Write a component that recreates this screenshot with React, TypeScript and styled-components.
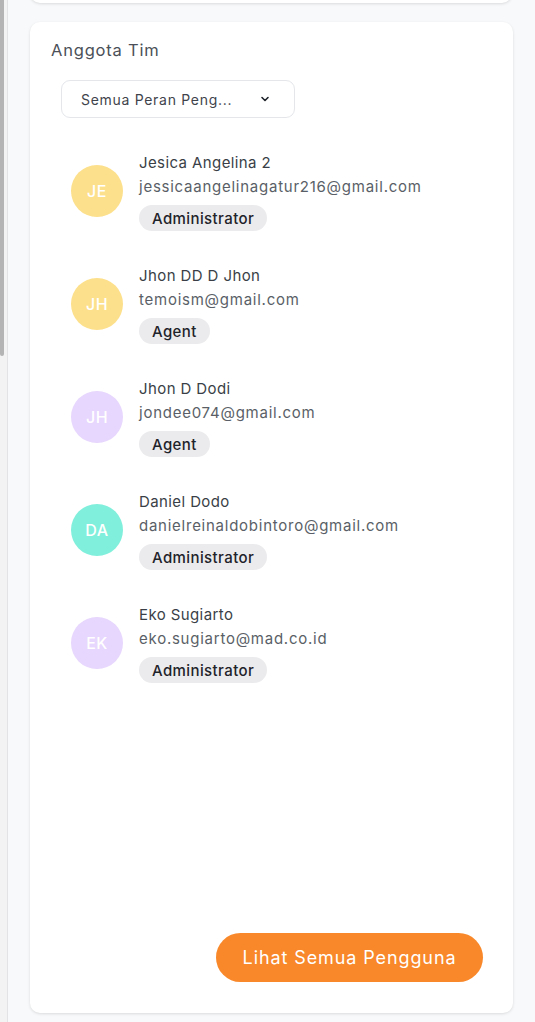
import React from "react";
import styled, { createGlobalStyle } from "styled-components";

const Global = createGlobalStyle`
  html, body { margin: 0; padding: 0; height: 100%; }
  body { font-family: Inter, "Noto Sans", Arial, sans-serif; background: #f8f9fa; overflow: hidden; }
  #root { height: 100%; }
`;

const Page = styled.div`
  display: flex;
  height: 1022px;
  width: 535px;
  overflow: hidden;
`;

const Rail = styled.div`
  width: 7px;
  flex: 0 0 7px;
  background: #f3f3f3;
  border-right: 1px solid #e3e3e5;
  display: flex;
  flex-direction: column;
`;

const Thumb = styled.div`
  width: 4px;
  height: 356px;
  background: #b4b4b4;
  border-radius: 0 0 3px 3px;
`;

const Main = styled.div`
  flex: 1;
  background: #f8f9fa;
  padding: 0 22px 9px 22px;
  display: flex;
  flex-direction: column;
`;

const TopCard = styled.div`
  height: 40px;
  margin-top: -37px;
  margin-right: 1px;
  background: #ffffff;
  border-radius: 10px;
  box-shadow: 0 1px 3px rgba(0, 0, 0, 0.12);
  flex: 0 0 auto;
`;

const Card = styled.div`
  margin-top: 19px;
  flex: 1;
  background: #ffffff;
  border-radius: 10px;
  box-shadow: 0 1px 3px rgba(0, 0, 0, 0.12);
  padding: 16px 20px 31px 21px;
  display: flex;
  flex-direction: column;
`;

const Title = styled.h2`
  margin: 0;
  font-size: 16.5px;
  line-height: 24px;
  font-weight: 400;
  letter-spacing: 0.8px;
  color: #4b5058;
`;

const FilterWrap = styled.div`
  margin-top: 18px;
  padding-left: 10px;
`;

const Select = styled.button`
  width: 234px;
  height: 38px;
  border: 1px solid #e4e6ea;
  border-radius: 9px;
  background: #fff;
  display: flex;
  align-items: center;
  justify-content: space-between;
  padding: 0 23px 0 19px;
  font-family: inherit;
  font-size: 14px;
  letter-spacing: 0.7px;
  color: #3f444c;
  cursor: pointer;
`;

const List = styled.div`
  margin-top: 33px;
  padding-left: 20px;
  display: flex;
  flex-direction: column;
  gap: 33px;
`;

const Row = styled.div`
  display: flex;
  align-items: center;
  gap: 16px;
`;

const Avatar = styled.div<{ $bg: string }>`
  width: 52px;
  height: 52px;
  border-radius: 50%;
  background: ${(p) => p.$bg};
  color: #ffffff;
  font-size: 16px;
  font-weight: 500;
  letter-spacing: 0.5px;
  display: flex;
  align-items: center;
  justify-content: center;
  flex: 0 0 52px;
`;

const Info = styled.div`
  display: flex;
  flex-direction: column;
  align-items: flex-start;
`;

const Name = styled.div`
  font-size: 15px;
  line-height: 24px;
  letter-spacing: 0.4px;
  color: #3a3f47;
`;

const Email = styled.div`
  font-size: 15px;
  line-height: 24px;
  letter-spacing: 0.75px;
  color: #5a5f67;
`;

const Badge = styled.span`
  margin-top: 6px;
  height: 26px;
  padding: 0 13px;
  border-radius: 13px;
  background: #ebebed;
  color: #1f232a;
  font-size: 15px;
  font-weight: 500;
  letter-spacing: 0.4px;
  display: inline-flex;
  align-items: center;
`;

const Footer = styled.div`
  margin-top: auto;
  display: flex;
  justify-content: flex-end;
  padding-right: 10px;
`;

const Primary = styled.button`
  width: 267px;
  height: 49px;
  border: none;
  border-radius: 25px;
  background: #f8882a;
  color: #ffffff;
  font-family: inherit;
  font-size: 18px;
  font-weight: 400;
  letter-spacing: 0.9px;
  cursor: pointer;
`;

const members = [
  { i: "JE", name: "Jesica Angelina 2", email: "jessicaangelinagatur216@gmail.com", role: "Administrator", bg: "#fde08b" },
  { i: "JH", name: "Jhon DD D Jhon", email: "temoism@gmail.com", role: "Agent", bg: "#fde08b" },
  { i: "JH", name: "Jhon D Dodi", email: "jondee074@gmail.com", role: "Agent", bg: "#e7d6fd" },
  { i: "DA", name: "Daniel Dodo", email: "danielreinaldobintoro@gmail.com", role: "Administrator", bg: "#80efdb" },
  { i: "EK", name: "Eko Sugiarto", email: "eko.sugiarto@mad.co.id", role: "Administrator", bg: "#e7d6fd" },
];

export default function App() {
  return (
    <>
      <Global />
      <Page>
        <Rail>
          <Thumb />
        </Rail>
        <Main>
          <TopCard />
          <Card>
            <Title>Anggota Tim</Title>
            <FilterWrap>
              <Select>
                <span>Semua Peran Peng...</span>
                <svg width="12" height="12" viewBox="0 0 24 24" fill="none" stroke="#1f232a" strokeWidth="3.2" strokeLinecap="round" strokeLinejoin="round">
                  <path d="M6 9l6 6 6-6" />
                </svg>
              </Select>
            </FilterWrap>
            <List>
              {members.map((m, idx) => (
                <Row key={idx}>
                  <Avatar $bg={m.bg}>{m.i}</Avatar>
                  <Info>
                    <Name>{m.name}</Name>
                    <Email>{m.email}</Email>
                    <Badge>{m.role}</Badge>
                  </Info>
                </Row>
              ))}
            </List>
            <Footer>
              <Primary>Lihat Semua Pengguna</Primary>
            </Footer>
          </Card>
        </Main>
      </Page>
    </>
  );
}
